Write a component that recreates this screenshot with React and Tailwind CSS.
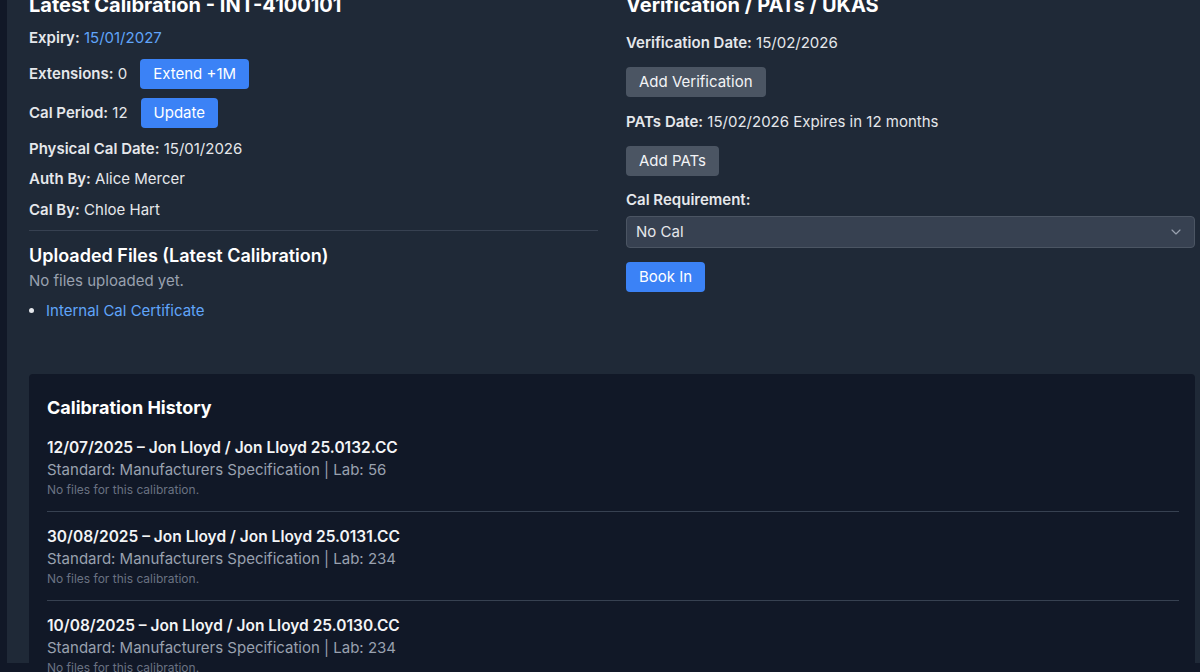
import { ChevronDown } from 'lucide-react'

const HISTORY = [
  { date: '12/07/2025', who: 'Jon Lloyd / Jon Lloyd', cert: '25.0132.CC', lab: '56' },
  { date: '30/08/2025', who: 'Jon Lloyd / Jon Lloyd', cert: '25.0131.CC', lab: '234' },
  { date: '10/08/2025', who: 'Jon Lloyd / Jon Lloyd', cert: '25.0130.CC', lab: '234' }
]

function Field({ label, children, className = '' }) {
  return (
    <p className={`text-[15px] leading-[22px] text-gray-200 ${className}`}>
      <span className="font-semibold">{label}</span> {children}
    </p>
  )
}

export default function App() {
  return (
    <div
      className="h-[672px] overflow-hidden bg-[#111827] pl-[7px] text-gray-100"
      style={{ fontFamily: 'Inter, "Noto Sans", sans-serif' }}
    >
      <div className="h-full bg-[#1f2937] pl-[22px] pr-[5px]">
        <div className="-mt-[9px] grid grid-cols-2 gap-7">
          {/* Latest calibration */}
          <section>
            <h2 className="text-xl leading-7 font-bold text-white mb-[8px]">Latest Calibration - INT-4100101</h2>
            <Field label="Expiry:">
              <span className="text-[#60a5fa]">15/01/2027</span>
            </Field>
            <div className="mt-[10px] flex items-center gap-[13px]">
              <Field label="Extensions:">0</Field>
              <button className="h-[30px] px-[13px] rounded bg-[#3b82f6] text-white text-[15px]">Extend +1M</button>
            </div>
            <div className="mt-[9px] flex items-center gap-[13px]">
              <Field label="Cal Period:">12</Field>
              <button className="h-[30px] px-[13px] rounded bg-[#3b82f6] text-white text-[15px]">Update</button>
            </div>
            <Field label="Physical Cal Date:" className="mt-[10px]">15/01/2026</Field>
            <Field label="Auth By:" className="mt-[8px]">Alice Mercer</Field>
            <Field label="Cal By:" className="mt-[9px]">Chloe Hart</Field>
            <div className="mt-[9px] border-t border-[#374151]" />
            <h3 className="mt-[11px] text-[18px] leading-7 font-semibold text-white">Uploaded Files (Latest Calibration)</h3>
            <p className="text-[15px] leading-[22px] text-gray-400">No files uploaded yet.</p>
            <ul className="mt-[8px] list-disc pl-[17px] marker:text-gray-200">
              <li className="text-[15px] leading-[22px] text-[#60a5fa]">Internal Cal Certificate</li>
            </ul>
          </section>

          {/* Verification */}
          <section>
            <h2 className="text-xl leading-7 font-bold text-white mb-[13px]">Verification / PATs / UKAS</h2>
            <Field label="Verification Date:">15/02/2026</Field>
            <button className="mt-[13px] h-[30px] px-[13px] rounded bg-[#4b5563] text-gray-100 text-[15px]">Add Verification</button>
            <Field label="PATs Date:" className="mt-[14px]">15/02/2026 Expires in 12 months</Field>
            <button className="mt-[13px] block h-[30px] px-[13px] rounded bg-[#4b5563] text-gray-100 text-[15px]">Add PATs</button>
            <p className="mt-[13px] text-[15px] leading-[22px] font-semibold text-gray-200">Cal Requirement:</p>
            <div className="mt-[5px] h-[32px] flex items-center justify-between rounded border border-[#4b5563] bg-[#374151] pl-[9px] pr-[10px]">
              <span className="text-[15px] text-gray-200">No Cal</span>
              <ChevronDown size={16} strokeWidth={1.75} className="text-gray-400" />
            </div>
            <button className="mt-[14px] h-[30px] px-[13px] rounded bg-[#3b82f6] text-white text-[15px]">Book In</button>
          </section>
        </div>

        {/* History */}
        <div className="mt-[52px] rounded bg-[#111827] pl-[18px] pr-4 pt-[20px] pb-4">
          <h2 className="text-[18px] leading-7 font-bold text-white">Calibration History</h2>
          <div className="mt-[15px]">
            {HISTORY.map((h, i) => (
              <div key={h.cert} className={i > 0 ? 'border-t border-[#374151] pt-[14px]' : ''}>
                <p className="text-[15.5px] leading-[22px] font-semibold text-gray-100">
                  {h.date} – {h.who} {h.cert}
                </p>
                <p className="text-[15px] leading-[22px] text-gray-400">
                  Standard: Manufacturers Specification | Lab: {h.lab}
                </p>
                <p className="text-xs leading-[18px] text-gray-500 mb-[12px]">No files for this calibration.</p>
              </div>
            ))}
          </div>
        </div>
      </div>
    </div>
  )
}
